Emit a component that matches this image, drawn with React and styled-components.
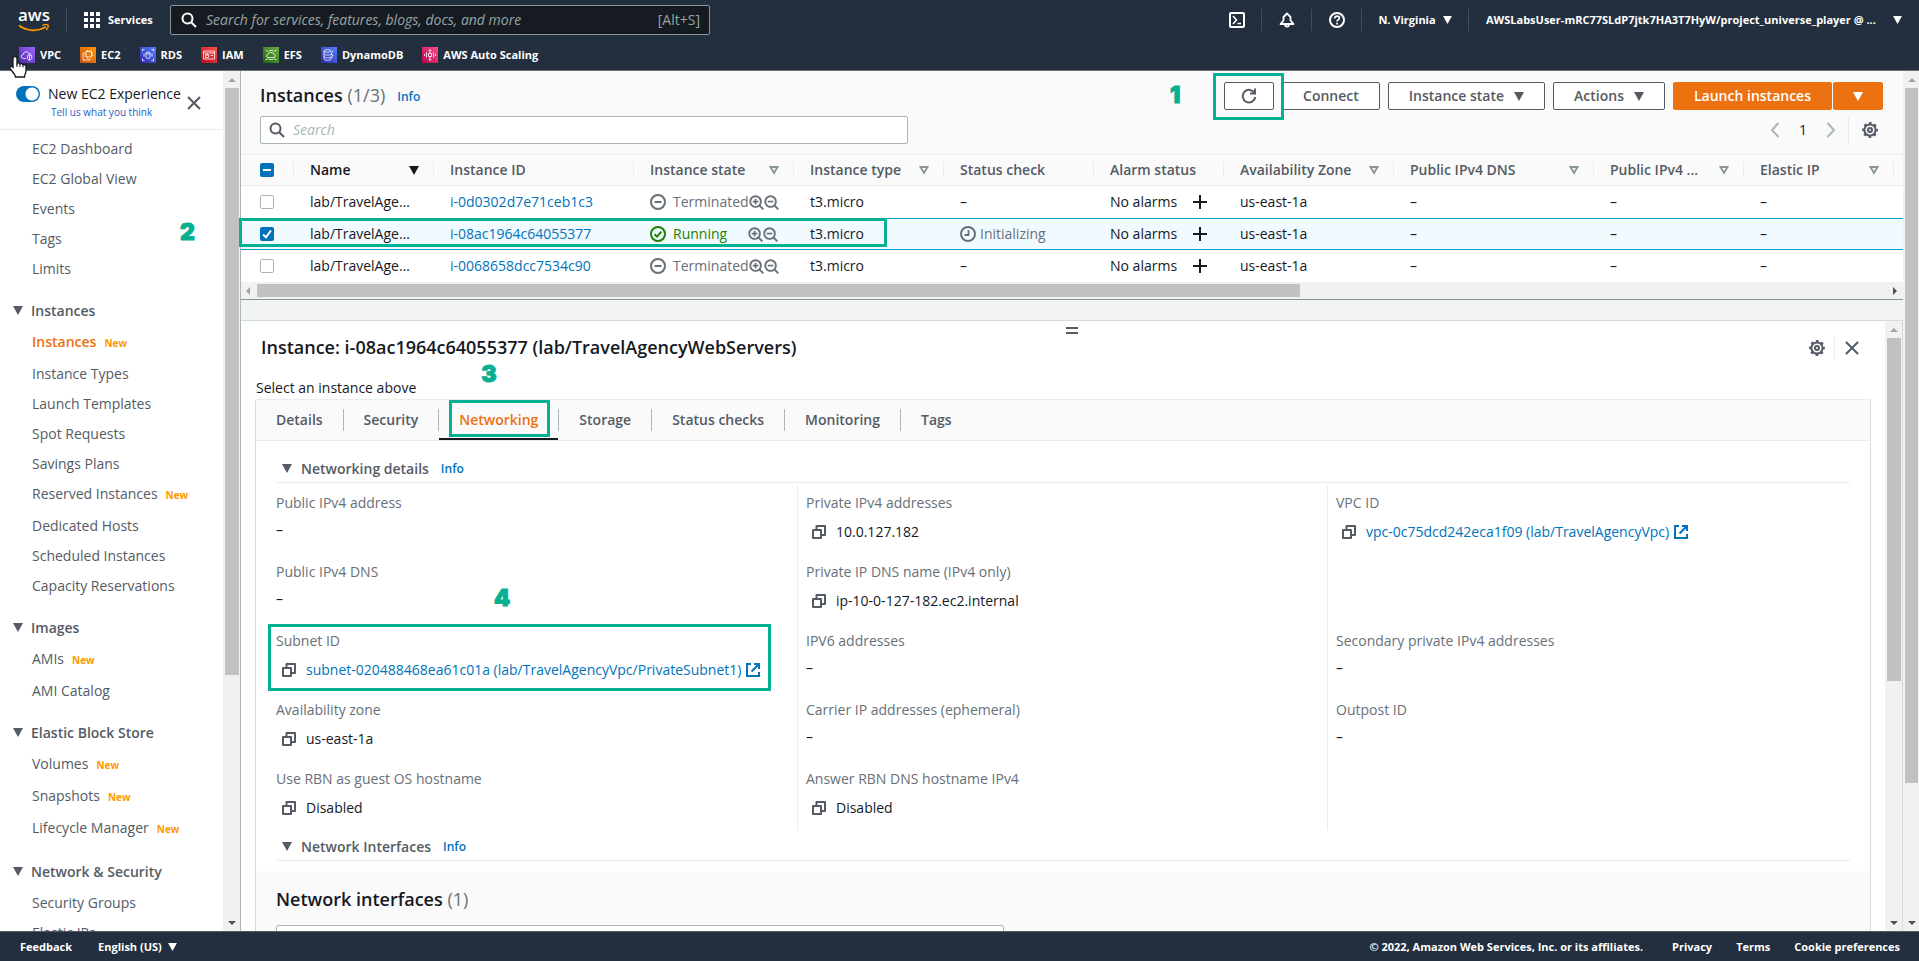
import React from 'react';
import styled, { createGlobalStyle, css } from 'styled-components';

const favorites = [
  { name: 'VPC', from: '#4d27a8', to: '#a166ff', art: 'vpc' },
  { name: 'EC2', from: '#c8511b', to: '#ff9900', art: 'ec2' },
  { name: 'RDS', from: '#2e27ad', to: '#527fff', art: 'rds' },
  { name: 'IAM', from: '#bd0816', to: '#ff5252', art: 'iam' },
  { name: 'EFS', from: '#1b660f', to: '#6cae3e', art: 'efs' },
  { name: 'DynamoDB', from: '#2e27ad', to: '#527fff', art: 'dynamo' },
  { name: 'AWS Auto Scaling', from: '#b0084d', to: '#ff4f8b', art: 'scaling' },
];

const navGroups = [
  {
    items: [
      { name: 'EC2 Dashboard' },
      { name: 'EC2 Global View' },
      { name: 'Events' },
      { name: 'Tags' },
      { name: 'Limits' },
    ],
  },
  {
    title: 'Instances',
    items: [
      { name: 'Instances', isNew: true, active: true },
      { name: 'Instance Types' },
      { name: 'Launch Templates' },
      { name: 'Spot Requests' },
      { name: 'Savings Plans' },
      { name: 'Reserved Instances', isNew: true },
      { name: 'Dedicated Hosts' },
      { name: 'Scheduled Instances' },
      { name: 'Capacity Reservations' },
    ],
  },
  {
    title: 'Images',
    items: [{ name: 'AMIs', isNew: true }, { name: 'AMI Catalog' }],
  },
  {
    title: 'Elastic Block Store',
    items: [
      { name: 'Volumes', isNew: true },
      { name: 'Snapshots', isNew: true },
      { name: 'Lifecycle Manager', isNew: true },
    ],
  },
  {
    title: 'Network & Security',
    items: [{ name: 'Security Groups' }, { name: 'Elastic IPs' }],
  },
];

const columns = [
  { name: 'Name', width: 140, sorted: true },
  { name: 'Instance ID', width: 200 },
  { name: 'Instance state', width: 160, filter: true },
  { name: 'Instance type', width: 150, filter: true },
  { name: 'Status check', width: 150 },
  { name: 'Alarm status', width: 130 },
  { name: 'Availability Zone', width: 170, filter: true },
  { name: 'Public IPv4 DNS', width: 200, filter: true },
  { name: 'Public IPv4 ...', width: 150, filter: true },
  { name: 'Elastic IP', width: 150, filter: true },
];

const instances = [
  { id: 'i-0d0302d7e71ceb1c3', state: 'Terminated' },
  { id: 'i-08ac1964c64055377', state: 'Running', check: 'Initializing', selected: true },
  { id: 'i-0068658dcc7534c90', state: 'Terminated' },
];

const tabs = ['Details', 'Security', 'Networking', 'Storage', 'Status checks', 'Monitoring', 'Tags'];

const detailColumns = [
  [
    { label: 'Public IPv4 address' },
    { label: 'Public IPv4 DNS' },
    {
      label: 'Subnet ID',
      value: 'subnet-020488468ea61c01a (lab/TravelAgencyVpc/PrivateSubnet1)',
      link: true,
      step: 4,
    },
    { label: 'Availability zone', value: 'us-east-1a' },
    { label: 'Use RBN as guest OS hostname', value: 'Disabled' },
  ],
  [
    { label: 'Private IPv4 addresses', value: '10.0.127.182' },
    { label: 'Private IP DNS name (IPv4 only)', value: 'ip-10-0-127-182.ec2.internal' },
    { label: 'IPV6 addresses' },
    { label: 'Carrier IP addresses (ephemeral)' },
    { label: 'Answer RBN DNS hostname IPv4', value: 'Disabled' },
  ],
  [
    { label: 'VPC ID', value: 'vpc-0c75dcd242eca1f09 (lab/TravelAgencyVpc)', link: true },
    null,
    { label: 'Secondary private IPv4 addresses' },
    { label: 'Outpost ID' },
  ],
];

const Icon = ({ size = 16, children, ...rest }) => (
  <svg width={size} height={size} viewBox="0 0 16 16" fill="none" stroke="currentColor" strokeWidth="2" aria-hidden="true" {...rest}>
    {children}
  </svg>
);

const Caret = ({ size = 10 }) => (
  <svg width={size} height={size - 1} viewBox="0 0 10 9" fill="currentColor" aria-hidden="true">
    <path d="M0 0h10L5 9z" />
  </svg>
);

const FilterCaret = () => (
  <svg width="10" height="9" viewBox="0 0 10 9" fill="none" stroke="#879596" strokeWidth="1.8" aria-hidden="true">
    <path d="M1.5 1h7L5 7z" />
  </svg>
);

const SearchIcon = () => (
  <Icon>
    <circle cx="6.5" cy="6.5" r="5" />
    <path d="M10.2 10.2 15 15" />
  </Icon>
);

const CloseIcon = () => (
  <Icon>
    <path d="M2 2l12 12M14 2 2 14" />
  </Icon>
);

const GearIcon = () => (
  <Icon>
    <circle cx="8" cy="8" r="5.6" strokeWidth="2" />
    <circle cx="8" cy="8" r="7" strokeWidth="1.8" strokeDasharray="2.75 2.75" strokeDashoffset="1.35" />
    <circle cx="8" cy="8" r="2" strokeWidth="2" />
  </Icon>
);

const CopyIcon = () => (
  <Icon strokeLinejoin="round">
    <path d="M2 6h8v8H2z" />
    <path d="M5.5 5.5V2H14v9h-3.5" />
  </Icon>
);

const ExternalIcon = () => (
  <Icon>
    <path d="M6 2H2v12h12v-4" />
    <path d="M9 2h5v5M14 2 6.5 9.5" />
  </Icon>
);

const ZoomIcon = ({ plus }) => (
  <Icon size={15}>
    <circle cx="7" cy="7" r="5.7" strokeWidth="2" />
    <path d="M11.2 11.2 15.3 15.3" />
    <path d={plus ? 'M4 7h6M7 4v6' : 'M4 7h6'} strokeWidth="1.8" />
  </Icon>
);

const StateIcon = ({ running }) => (
  <Icon>
    <circle cx="8" cy="8" r="7" />
    <path d={running ? 'M4.6 8.2 7 10.6l4.4-5' : 'M4.5 8h7'} />
  </Icon>
);

const PendingIcon = () => (
  <Icon>
    <circle cx="8" cy="8" r="7" />
    <path d="M8.5 4v5h-4" strokeWidth="1.8" />
  </Icon>
);

const serviceArt = {
  vpc: (
    <>
      <path d="M7 11.5H4.5a2 2 0 0 1-.3-4A3 3 0 0 1 9.8 6.3a2 2 0 0 1 2.2 1.2" />
      <path d="M8.5 8.5l2-.8 2.2.8V11c0 1.200-1 1.800-2.200 2.300-1.200-.5-2-1.100-2-2.300zM10.5 8v5" />
    </>
  ),
  ec2: (
    <>
      <path d="M6 4.500h5.500V10H6zM4.500 6H3v7h7v-1.500" />
      <path d="M7.500 3v1.500M10 3v1.500M13 6h-1.500M13 8.500h-1.500M4.500 7H6M4.500 9H6M7.500 10v1.500" />
    </>
  ),
  rds: (
    <>
      <path d="M6 6v4.500c0 1 4 1 4 0V6" />
      <ellipse cx="8" cy="6" rx="2" ry="1" />
      <path d="M2.500 4.500v-2h2M11.500 2.500h2v2M13.500 11.500v2h-2M4.500 13.500h-2v-2M4 6.500v3M12 6.500v3" />
    </>
  ),
  iam: (
    <>
      <path d="M2.500 4h11v8h-11zM2.500 6h11M9.500 8.500h2.500" />
      <path d="M4.500 8h3v2.500h-3zM5.200 8V7h1.600v1" />
    </>
  ),
  efs: (
    <>
      <path d="M5 10.500a1.500 1.500 0 0 1 0-3A3 3 0 0 1 10.500 7a1.700 1.700 0 0 1 0 3.500z" />
      <path d="M2.500 3l3 2M13.500 3l-3 2M2.500 13l3-1.500M13.500 13l-3-1.500M6 3.500h4M6 12.500h4" />
    </>
  ),
  dynamo: (
    <>
      <ellipse cx="6.500" cy="4" rx="3.500" ry="1.300" />
      <path d="M3 4v8c0 1.700 7 1.700 7 0V9.500M3 6.700c0 1.500 5 1.700 6 .8M3 9.500c0 1.500 5 1.700 6.500.8M12 3.500 9.700 8H12l-1.500 3" />
    </>
  ),
  scaling: (
    <>
      <path d="M6.500 6.500h3v3h-3zM8 2.500v4M8 9.500v4M6.800 4 8 2.700 9.200 4M6.800 12 8 13.300 9.200 12" />
      <path d="M4.500 5.500v5M11.500 5.500v5M2.500 7v2M13.500 7v2" />
    </>
  ),
};

const ServiceIcon = ({ from, to, art }) => (
  <svg width="16" height="16" viewBox="0 0 16 16" aria-hidden="true">
    <defs>
      <linearGradient id={`grad-${art}`} x1="0" y1="1" x2="1" y2="0">
        <stop offset="0" stopColor={from} />
        <stop offset="1" stopColor={to} />
      </linearGradient>
    </defs>
    <rect width="16" height="16" fill={`url(#grad-${art})`} />
    <g fill="none" stroke="#fff" strokeWidth=".8">
      {serviceArt[art]}
    </g>
  </svg>
);

const ScrollBar = ({ size, narrow }) => (
  <Track $narrow={narrow}>
    <TrackArrow $dim>
      <path d="M4 0l4 4H0z" />
    </TrackArrow>
    <ThumbArea>
      <Thumb $size={size} />
    </ThumbArea>
    <TrackArrow>
      <path d="M0 0h8L4 4z" />
    </TrackArrow>
  </Track>
);

const Field = ({ field }) => {
  if (!field) {
    return <FieldBox />;
  }
  return (
    <FieldBox>
      <dt>{field.label}</dt>
      {field.value ? (
        <FieldValue>
          <IconButton aria-label={`Copy ${field.label}`}>
            <CopyIcon />
          </IconButton>
          {field.link ? (
            <FieldLink href="#">
              {field.value}
              <ExternalIcon />
            </FieldLink>
          ) : (
            field.value
          )}
        </FieldValue>
      ) : (
        <EmptyValue>–</EmptyValue>
      )}
      {field.step && (
        <>
          <SubnetFrame />
          <SubnetStep>{field.step}</SubnetStep>
        </>
      )}
    </FieldBox>
  );
};

const App = () => {
  return (
    <Page>
      <GlobalStyle />
      <Header>
        <TopRow>
          <Logo href="#" aria-label="AWS home">
            aws
            <svg width="32" height="8" viewBox="0 0 32 8" fill="none" stroke="#ff9900" strokeWidth="2" aria-hidden="true">
              <path d="M1 1.500c8 5.500 18 6.500 27 1.500" />
              <path d="M24.500 1.200c2.500-.6 5-.6 5.500 0s-.3 3-1.800 4.800" strokeWidth="1.4" />
            </svg>
          </Logo>
          <Services>
            <svg width="16" height="16" viewBox="0 0 16 16" fill="currentColor" aria-hidden="true">
              <path d="M0 0h4v4H0zM6 0h4v4H6zM12 0h4v4h-4zM0 6h4v4H0zM6 6h4v4H6zM12 6h4v4h-4zM0 12h4v4H0zM6 12h4v4H6zM12 12h4v4h-4z" />
            </svg>
            Services
          </Services>
          <GlobalSearch>
            <SearchIcon />
            <input type="text" aria-label="Search AWS" placeholder="Search for services, features, blogs, docs, and more" />
            <span>[Alt+S]</span>
          </GlobalSearch>
          <Tools>
            <Tool aria-label="CloudShell">
              <Icon>
                <rect x="1" y="1" width="14" height="14" rx="1" />
                <path d="M4 4l3.500 4L4 12M8.500 11.500h3.500" strokeWidth="1.6" />
              </Icon>
            </Tool>
            <Tool aria-label="Notifications">
              <Icon>
                <path d="M8 1.500 4.500 5v3.500L1.500 12h13l-3-3.500V5zM6 12c0 3.500 4 3.500 4 0" strokeWidth="1.8" strokeLinejoin="round" />
              </Icon>
            </Tool>
            <Tool aria-label="Help">
              <Icon>
                <circle cx="8" cy="8" r="7" />
                <path d="M5.600 6.500c0-3.200 4.800-3.200 4.800-.4C10.400 7.800 8 7.600 8 9.500M8 10.800v1.800" strokeWidth="1.7" />
              </Icon>
            </Tool>
            <Region>
              N. Virginia
              <Caret size={9} />
            </Region>
            <Account>
              AWSLabsUser-mRC77SLdP7jtk7HA3T7HyW/project_universe_player @ ...
              <Caret size={9} />
            </Account>
          </Tools>
        </TopRow>
        <Favorites>
          {favorites.map((item) => (
            <Favorite key={item.name} href="#">
              <ServiceIcon {...item} />
              {item.name}
            </Favorite>
          ))}
        </Favorites>
        <Pointer width="22" height="24" viewBox="0 0 22 24" aria-hidden="true">
          <path
            d="M8 1.500c1.200 0 2 .8 2 2v5c.5-.9 2.800-.8 3 .6.800-.8 2.700-.5 3 .9.900-.6 2.600-.2 3 1.300V16c0 2-1.500 3.500-1.500 6h-9c0-2.500-3-5-5.500-8.500-.8-1.200.8-2.800 2.200-1.700L6 12.500v-9c0-1.200.8-2 2-2z"
            fill="#fff"
            stroke="#16191f"
            strokeWidth="1.3"
          />
          <path d="M10 8.500V12M13 9.200V12M16 10.200V12.500" stroke="#16191f" strokeWidth="1" />
        </Pointer>
      </Header>

      <Body>
        <Sidebar>
          <SidebarHeader>
            <Experience>
              <label>
                <Toggle type="checkbox" defaultChecked />
                New EC2 Experience
              </label>
              <a href="#">Tell us what you think</a>
            </Experience>
            <IconButton aria-label="Close navigation">
              <CloseIcon />
            </IconButton>
          </SidebarHeader>
          <Nav>
            {navGroups.map((group, i) => (
              <NavGroup key={i}>
                {group.title && (
                  <NavTitle>
                    <Caret />
                    {group.title}
                  </NavTitle>
                )}
                {group.items.map((item) => (
                  <NavItem key={item.name} href="#" $active={item.active} $tall={item.isNew}>
                    {item.name}
                    {item.isNew && <NewTag>New</NewTag>}
                  </NavItem>
                ))}
              </NavGroup>
            ))}
          </Nav>
          <NavStep>2</NavStep>
        </Sidebar>
        <ScrollBar size="71%" />

        <Main>
          <TableHeader>
            <TitleRow>
              <Title>
                Instances <em>(1/3)</em>
              </Title>
              <InfoLink href="#">Info</InfoLink>
              <Actions>
                <Highlighted>
                  <Button $icon aria-label="Refresh">
                    <Icon>
                      <path d="M13.500 5A6.300 6.300 0 1 0 14.300 9" />
                      <path d="M14 .5v5H9" />
                    </Icon>
                  </Button>
                  <RefreshFrame />
                  <RefreshStep>1</RefreshStep>
                </Highlighted>
                <Button>Connect</Button>
                <Button>
                  Instance state
                  <Caret />
                </Button>
                <Button>
                  Actions
                  <Caret />
                </Button>
                <SplitButton>
                  <Button $primary>Launch instances</Button>
                  <Button $primary $icon aria-label="More launch options">
                    <Caret />
                  </Button>
                </SplitButton>
              </Actions>
            </TitleRow>
            <FilterRow>
              <FilterBox>
                <SearchIcon />
                <input type="text" aria-label="Search instances" placeholder="Search" />
              </FilterBox>
              <Pagination>
                <PageArrow aria-label="Previous page">
                  <Icon>
                    <path d="M11.500 1 5 8l6.500 7" />
                  </Icon>
                </PageArrow>
                <span>1</span>
                <PageArrow aria-label="Next page">
                  <Icon>
                    <path d="M4.500 1 11 8l-6.500 7" />
                  </Icon>
                </PageArrow>
              </Pagination>
              <Preferences>
                <IconButton aria-label="Preferences">
                  <GearIcon />
                </IconButton>
              </Preferences>
            </FilterRow>
          </TableHeader>

          <TableArea>
            <TableViewport>
              <Table>
                <colgroup>
                  <col width="53" />
                  {columns.map((col) => (
                    <col key={col.name} width={col.width} />
                  ))}
                  <col />
                </colgroup>
                <thead>
                  <tr>
                    <CheckHead>
                      <CheckHeadContent>
                        <Checkbox type="checkbox" aria-label="Select all" $partial />
                      </CheckHeadContent>
                    </CheckHead>
                    {columns.map((col) => (
                      <Th key={col.name} $sorted={col.sorted}>
                        <ThContent>
                          {col.name}
                          {col.sorted && <Caret />}
                          {col.filter && <FilterCaret />}
                        </ThContent>
                      </Th>
                    ))}
                    <Th aria-hidden="true" />
                  </tr>
                </thead>
                <tbody>
                  {instances.map((row) => (
                    <Row key={row.id} $selected={row.selected}>
                      <CheckCell>
                        <Checkbox type="checkbox" aria-label={`Select ${row.id}`} defaultChecked={row.selected} />
                      </CheckCell>
                      <td>lab/TravelAge…</td>
                      <td>
                        <a href="#">{row.id}</a>
                      </td>
                      <td>
                        <State $running={row.state === 'Running'}>
                          <StateIcon running={row.state === 'Running'} />
                          <span>{row.state}</span>
                          <ZoomIcons>
                            <ZoomIcon plus />
                            <ZoomIcon />
                          </ZoomIcons>
                        </State>
                      </td>
                      <td>t3.micro</td>
                      <td>
                        {row.check ? (
                          <Check>
                            <PendingIcon />
                            {row.check}
                          </Check>
                        ) : (
                          '–'
                        )}
                      </td>
                      <td>
                        <Alarm>
                          No alarms
                          <IconButton $dark aria-label="Add alarm">
                            <Icon>
                              <path d="M8 1v14M1 8h14" />
                            </Icon>
                          </IconButton>
                        </Alarm>
                      </td>
                      <td>us-east-1a</td>
                      <td>–</td>
                      <td>–</td>
                      <td>–</td>
                      <Filler />
                    </Row>
                  ))}
                </tbody>
              </Table>
            </TableViewport>
            <HTrack>
              <svg width="4" height="8" viewBox="0 0 4 8" fill="#a3a3a3" aria-hidden="true">
                <path d="M4 0v8L0 4z" />
              </svg>
              <HThumbArea>
                <HThumb />
              </HThumbArea>
              <svg width="4" height="8" viewBox="0 0 4 8" fill="#505050" aria-hidden="true">
                <path d="M0 0v8l4-4z" />
              </svg>
            </HTrack>
            <RowFrame />
          </TableArea>

          <SplitPanel>
            <PanelContent>
              <PanelHeader>
                <Title>Instance: i-08ac1964c64055377 (lab/TravelAgencyWebServers)</Title>
                <PanelTools>
                  <IconButton aria-label="Panel preferences">
                    <GearIcon />
                  </IconButton>
                  <IconButton aria-label="Close panel">
                    <CloseIcon />
                  </IconButton>
                </PanelTools>
              </PanelHeader>
              <Hint>Select an instance above</Hint>
              <TabBox>
                <TabBar role="tablist">
                  {tabs.map((tab) => (
                    <TabSlot key={tab}>
                      <Tab role="tab" aria-selected={tab === 'Networking'} $active={tab === 'Networking'}>
                        {tab}
                      </Tab>
                      {tab === 'Networking' && (
                        <>
                          <TabFrame />
                          <TabStep>3</TabStep>
                        </>
                      )}
                    </TabSlot>
                  ))}
                </TabBar>
                <TabContent>
                  <SectionTitle $first>
                    <Caret />
                    <h3>Networking details</h3>
                    <InfoLink href="#">Info</InfoLink>
                  </SectionTitle>
                  <DetailGrid>
                    {detailColumns.map((fields, i) => (
                      <DetailColumn key={i}>
                        {fields.map((field, j) => (
                          <Field key={j} field={field} />
                        ))}
                      </DetailColumn>
                    ))}
                  </DetailGrid>
                  <SectionTitle>
                    <Caret />
                    <h3>Network Interfaces</h3>
                    <InfoLink href="#">Info</InfoLink>
                  </SectionTitle>
                  <InterfacePanel>
                    <Title>
                      Network interfaces <em>(1)</em>
                    </Title>
                    <InterfaceSearch type="text" aria-label="Filter network interfaces" />
                  </InterfacePanel>
                </TabContent>
              </TabBox>
            </PanelContent>
            <ScrollBar size="59.500%" />
            <Handle aria-label="Resize panel" />
          </SplitPanel>
        </Main>
        <ScrollBar size="84%" narrow />
      </Body>

      <Footer>
        <a href="#">Feedback</a>
        <Language>
          English (US)
          <Caret size={9} />
        </Language>
        <Legal>
          <span>© 2022, Amazon Web Services, Inc. or its affiliates.</span>
          <a href="#">Privacy</a>
          <a href="#">Terms</a>
          <a href="#">Cookie preferences</a>
        </Legal>
      </Footer>
    </Page>
  );
};

export default App;

const GlobalStyle = createGlobalStyle`
  * {
    box-sizing: border-box;
  }
  body {
    margin: 0;
    font-family: 'Open Sans', 'Noto Sans', sans-serif;
    font-size: 14px;
    line-height: 22px;
    color: #16191f;
    background: #fff;
  }
  button, input {
    font: inherit;
    color: inherit;
  }
  a {
    color: #0073bb;
    text-decoration: none;
  }
  h1, h3, dl, dd {
    margin: 0;
  }
  svg {
    flex: none;
    display: block;
  }
`;

const Page = styled.div`
  display: flex;
  flex-direction: column;
  height: 100vh;
`;

/* header */
const Header = styled.header`
  position: relative;
  z-index: 2;
  flex: none;
  background-color: #232f3e;
  border-bottom: 1px solid #687078;
  color: #fff;
  font-size: 11px;
  font-weight: 700;
`;
const TopRow = styled.div`
  display: flex;
  align-items: center;
  height: 40px;
`;
const Logo = styled.a`
  display: flex;
  flex-direction: column;
  width: 67px;
  padding-left: 18px;
  border-right: 1px solid #414d5c;
  color: #fff;
  font-size: 17px;
  font-weight: 600;
  line-height: 14px;
  svg {
    margin-top: 2px;
  }
`;
const Services = styled.button`
  display: flex;
  align-items: center;
  gap: 8px;
  width: 103px;
  padding: 0 0 0 17px;
  border: none;
  background: none;
`;
const GlobalSearch = styled.div`
  display: flex;
  align-items: center;
  gap: 7px;
  flex: 0 1 540px;
  height: 30px;
  padding: 0 9px 0 10px;
  border: 1px solid #879596;
  border-radius: 2px;
  background-color: #161b22;
  font-size: 14px;
  font-weight: 400;
  input {
    flex: 1;
    min-width: 0;
    border: none;
    background: none;
    outline: none;
    &::placeholder {
      color: #95a5a6;
      font-style: italic;
      opacity: 1;
    }
  }
  span {
    color: #95a5a6;
  }
`;
const Tools = styled.div`
  display: flex;
  align-items: center;
  margin-left: auto;
`;
const Tool = styled.button`
  display: flex;
  align-items: center;
  justify-content: center;
  width: 50px;
  height: 22px;
  padding: 0;
  border: none;
  border-right: 1px solid #414d5c;
  background: none;
`;
const Region = styled(Tool)`
  width: 107px;
  gap: 7px;
`;
const Account = styled(Tool)`
  width: 450px;
  padding: 0 17px;
  border: none;
  justify-content: space-between;
`;
const Favorites = styled.nav`
  display: flex;
  align-items: center;
  gap: 19px;
  height: 30px;
  padding-left: 19px;
`;
const Favorite = styled.a`
  display: flex;
  align-items: center;
  gap: 5px;
  color: #fff;
`;
const Pointer = styled.svg`
  position: absolute;
  left: 7px;
  top: 55px;
`;

/* shared parts */
const IconButton = styled.button`
  display: flex;
  padding: 0;
  border: none;
  background: none;
  color: ${({ $dark }) => ($dark ? '#16191f' : '#545b64')};
`;
const Title = styled.h1`
  padding-bottom: 2px;
  font-size: 18px;
  font-weight: 600;
  line-height: 24px;
  em {
    color: #687078;
    font-style: normal;
    font-weight: 400;
  }
`;
const InfoLink = styled.a`
  padding-top: 1px;
  font-size: 12px;
  font-weight: 600;
`;
const Track = styled.div`
  display: flex;
  flex-direction: column;
  align-items: center;
  flex: none;
  width: ${({ $narrow }) => ($narrow ? 16 : 17)}px;
  padding: 7px 1px 6px 2px;
  background-color: #f1f1f1;
`;
const TrackArrow = styled.svg.attrs({ width: 8, height: 4, viewBox: '0 0 8 4' })`
  fill: ${({ $dim }) => ($dim ? '#a3a3a3' : '#505050')};
`;
const ThumbArea = styled.div`
  flex: 1;
  width: 100%;
  margin: 6px 0;
`;
const Thumb = styled.div`
  height: ${({ $size }) => $size};
  background-color: #c1c1c1;
`;

/* numbered steps and frames laid over the console */
const Frame = styled.span`
  position: absolute;
  border: 3px solid #06b093;
  pointer-events: none;
`;
const Step = styled.span`
  position: absolute;
  color: #06b093;
  font-family: Inter, sans-serif;
  font-size: 23px;
  font-weight: 900;
  line-height: 24px;
  -webkit-text-stroke: 1px #06b093;
  text-shadow: 0 0 3px #fff;
`;
const RefreshFrame = styled(Frame)`
  inset: -9px -10px -10px -11px;
`;
const RefreshStep = styled(Step)`
  left: -54px;
  top: 1px;
`;
const NavStep = styled(Step)`
  left: 180px;
  top: 149px;
`;
const RowFrame = styled(Frame)`
  left: -2px;
  top: 64px;
  width: 648px;
  height: 29px;
`;
const TabFrame = styled(Frame)`
  inset: 0 8px 3px 11px;
`;
const TabStep = styled(Step)`
  left: 43px;
  top: -38px;
`;
const SubnetFrame = styled(Frame)`
  left: -8px;
  top: 1px;
  width: 503px;
  height: 67px;
`;
const SubnetStep = styled(Step)`
  left: 218px;
  top: -37px;
`;

/* sidebar */
const Body = styled.div`
  display: flex;
  flex: 1;
  min-height: 0;
`;
const Sidebar = styled.aside`
  position: relative;
  flex: none;
  width: 223px;
  overflow: hidden;
`;
const SidebarHeader = styled.div`
  display: flex;
  align-items: center;
  justify-content: space-between;
  height: 59px;
  padding: 6px 21px 0 16px;
  border-bottom: 1px solid #eaeded;
`;
const Experience = styled.div`
  display: flex;
  flex-direction: column;
  label {
    display: flex;
    align-items: center;
    gap: 8px;
    line-height: 18px;
    white-space: nowrap;
  }
  a {
    padding-left: 35px;
    font-size: 10px;
    line-height: 18px;
    color: #2262c4;
  }
`;
const Toggle = styled.input`
  appearance: none;
  flex: none;
  width: 24px;
  height: 16px;
  margin: 0;
  border-radius: 8px;
  background: radial-gradient(circle at 16px 8px, #fff 6px, #0073bb 7px);
`;
const Nav = styled.nav`
  padding-top: 4px;
`;
const NavGroup = styled.div`
  display: flex;
  flex-direction: column;
  margin-bottom: 12px;
`;
const NavTitle = styled.div`
  display: flex;
  align-items: center;
  gap: 8px;
  height: 31px;
  padding: 0 0 2px 13px;
  color: #545b64;
  font-weight: 600;
`;
const NavItem = styled.a`
  display: flex;
  align-items: baseline;
  gap: 8px;
  height: ${({ $tall }) => ($tall ? 32 : 30)}px;
  padding: 4px 0 0 32px;
  color: ${({ $active }) => ($active ? '#ec7211' : '#545b64')};
  font-weight: ${({ $active }) => ($active ? 600 : 400)};
  white-space: nowrap;
`;
const NewTag = styled.span`
  color: #ff9900;
  font-size: 10px;
  font-weight: 700;
`;

/* instances table */
const Main = styled.main`
  display: flex;
  flex-direction: column;
  flex: 1;
  min-width: 0;
  border-left: 1px solid #aab7b8;
  background-color: #f2f3f3;
`;
const TableHeader = styled.div`
  flex: none;
  padding: 11px 20px 10px 19px;
  background-color: #fafafa;
`;
const TitleRow = styled.div`
  display: flex;
  align-items: center;
  gap: 12px;
`;
const Actions = styled.div`
  display: flex;
  gap: 8px;
  margin-left: auto;
`;
const Highlighted = styled.div`
  position: relative;
`;
const Button = styled.button`
  display: flex;
  align-items: center;
  justify-content: center;
  gap: 10px;
  height: 28px;
  padding: 0 ${({ $icon }) => ($icon ? 16 : 20)}px;
  border: 1px solid #545b64;
  border-radius: 2px;
  background-color: #fff;
  color: #545b64;
  font-weight: 600;
  white-space: nowrap;
  ${({ $icon }) =>
    $icon &&
    css`
      width: 50px;
    `}
  ${({ $primary }) =>
    $primary &&
    css`
      border-color: #ec7211;
      background-color: #ec7211;
      color: #fff;
    `}
`;
const SplitButton = styled.div`
  display: flex;
  gap: 1px;
`;
const FilterRow = styled.div`
  display: flex;
  align-items: center;
  margin-top: 6px;
`;
const FilterBox = styled.div`
  display: flex;
  align-items: center;
  gap: 6px;
  flex: 0 1 648px;
  height: 28px;
  padding: 0 8px;
  border: 1px solid #aab7b8;
  border-radius: 2px;
  background-color: #fff;
  color: #545b64;
  input {
    flex: 1;
    border: none;
    outline: none;
    &::placeholder {
      color: #aab7b8;
      font-style: italic;
      opacity: 1;
    }
  }
`;
const Pagination = styled.div`
  display: flex;
  align-items: center;
  gap: 16px;
  margin-left: auto;
  padding-right: 9px;
`;
const PageArrow = styled.button`
  display: flex;
  padding: 0;
  border: none;
  background: none;
  color: #aab7b8;
`;
const Preferences = styled.div`
  display: flex;
  align-items: center;
  height: 28px;
  padding: 0 5px 0 13px;
  border-left: 1px solid #eaeded;
`;
const TableArea = styled.div`
  position: relative;
  flex: none;
  border-bottom: 1px solid #879596;
`;
const TableViewport = styled.div`
  overflow: hidden;
`;
const Table = styled.table`
  width: 100%;
  table-layout: fixed;
  border-spacing: 0;
  background-color: #fff;
`;
const Th = styled.th`
  height: 32px;
  padding: 0;
  border-top: 1px solid #eaeded;
  border-bottom: 1px solid #eaeded;
  background-color: #fafafa;
  color: ${({ $sorted }) => ($sorted ? '#16191f' : '#545b64')};
  font-weight: 600;
  text-align: left;
`;
const ThContent = styled.div`
  display: flex;
  align-items: center;
  justify-content: space-between;
  height: 16px;
  padding: 0 14px 0 16px;
  border-right: 1px solid #eaeded;
  white-space: nowrap;
`;
const CheckHead = styled(Th)``;
const CheckHeadContent = styled(ThContent)`
  padding-left: 19px;
`;
const Row = styled.tr`
  td {
    height: 32px;
    padding: 0 0 0 16px;
    white-space: nowrap;
    ${({ $selected }) =>
      $selected &&
      css`
        border-top: 1px solid #00a1c9;
        border-bottom: 1px solid #00a1c9;
        background-color: #f1faff;
      `}
  }
`;
const CheckCell = styled.td`
  && {
    padding-left: 19px;
  }
`;
const Filler = styled.td`
  && {
    padding: 0;
  }
`;
const tick = `url("data:image/svg+xml,%3Csvg xmlns='http://www.w3.org/2000/svg' viewBox='0 0 14 14'%3E%3Cpath d='M3 7.500l3 2.700L11 3.500' fill='none' stroke='white' stroke-width='2'/%3E%3C/svg%3E")`;
const dash = `url("data:image/svg+xml,%3Csvg xmlns='http://www.w3.org/2000/svg' viewBox='0 0 14 14'%3E%3Cpath d='M3 7h8' stroke='white' stroke-width='2'/%3E%3C/svg%3E")`;
const Checkbox = styled.input`
  appearance: none;
  display: block;
  width: 14px;
  height: 14px;
  margin: 0;
  border: 1px solid #aab7b8;
  border-radius: 2px;
  background-color: #fff;
  &:checked {
    border: none;
    background: #0073bb ${tick};
  }
  ${({ $partial }) =>
    $partial &&
    css`
      border: none;
      background: #0073bb ${dash};
    `}
`;
const State = styled.div`
  display: flex;
  align-items: center;
  color: ${({ $running }) => ($running ? '#1d8102' : '#687078')};
  span {
    min-width: 82px;
    padding-left: 7px;
  }
`;
const ZoomIcons = styled.div`
  display: flex;
  color: #687078;
`;
const Check = styled.div`
  display: flex;
  align-items: center;
  gap: 4px;
  color: #687078;
`;
const Alarm = styled.div`
  display: flex;
  align-items: center;
  gap: 15px;
`;
const HTrack = styled.div`
  display: flex;
  align-items: center;
  justify-content: space-between;
  height: 17px;
  padding: 0 6px 0 5px;
  background-color: #f1f1f1;
`;
const HThumbArea = styled.div`
  flex: 1;
  margin: 0 7px;
`;
const HThumb = styled.div`
  width: 64%;
  height: 13px;
  background-color: #c1c1c1;
`;

/* split panel */
const SplitPanel = styled.section`
  position: relative;
  display: flex;
  flex: 1;
  min-height: 0;
  margin-top: 20px;
  border-top: 1px solid #d5dbdb;
  border-right: 1px solid #d5dbdb;
  background-color: #fff;
`;
const Handle = styled.button`
  position: absolute;
  top: 6px;
  left: 50%;
  width: 12px;
  height: 7px;
  margin-left: -6px;
  padding: 0;
  border: solid #545b64;
  border-width: 2px 0;
  background: none;
`;
const PanelContent = styled.div`
  flex: 1;
  min-width: 0;
  padding: 0 14px;
  overflow: hidden;
`;
const PanelHeader = styled.div`
  display: flex;
  align-items: center;
  justify-content: space-between;
  padding: 14px 11px 16px 6px;
`;
const PanelTools = styled.div`
  display: flex;
  align-items: center;
  gap: 19px;
  button + button {
    position: relative;
    &::before {
      content: '';
      position: absolute;
      left: -10px;
      top: -4px;
      height: 24px;
      border-left: 1px solid #eaeded;
    }
  }
`;
const Hint = styled.div`
  padding-left: 1px;
`;
const TabBox = styled.div`
  border: 1px solid #d5dbdb;
  border-top-color: #eaeded;
  border-radius: 2px;
`;
const TabBar = styled.div`
  display: flex;
  border-bottom: 1px solid #eaeded;
  background-color: #fafafa;
`;
const TabSlot = styled.div`
  position: relative;
  display: flex;
  align-items: center;
  & + &::before {
    content: '';
    height: 22px;
    border-left: 1px solid #aab7b8;
  }
`;
const Tab = styled.button`
  height: 40px;
  padding: 0 20px;
  border: none;
  background: none;
  color: ${({ $active }) => ($active ? '#ec7211' : '#545b64')};
  font-weight: 600;
  ${({ $active }) =>
    $active &&
    css`
      box-shadow: inset 0 -2px #16191f;
    `}
`;
const TabContent = styled.div`
  padding: 0 20px;
`;
const SectionTitle = styled.div`
  display: flex;
  align-items: center;
  height: 29px;
  margin-top: ${({ $first }) => ($first ? 13 : 2)}px;
  padding: 1px 0 0 6px;
  border-bottom: 1px solid #eaeded;
  color: #545b64;
  h3 {
    margin: 0 12px 0 9px;
    font-size: 14px;
    font-weight: 600;
  }
`;
const DetailGrid = styled.div`
  display: grid;
  grid-template-columns: repeat(3, minmax(0, 1fr));
  gap: 8px;
  margin: 2px -8px 0 0;
`;
const DetailColumn = styled.dl`
  border-right: 1px solid #eaeded;
  &:last-child {
    border-right: none;
  }
`;
const FieldBox = styled.div`
  position: relative;
  height: 69px;
  padding-top: 7px;
  dt {
    color: #687078;
  }
`;
const FieldValue = styled.dd`
  display: flex;
  align-items: center;
  gap: 9px;
  margin-top: 7px;
  padding-left: 5px;
  white-space: nowrap;
`;
const FieldLink = styled.a`
  display: flex;
  align-items: center;
  gap: 4px;
`;
const EmptyValue = styled.dd`
  margin-top: 5px;
`;
const InterfacePanel = styled.div`
  display: flex;
  flex-direction: column;
  gap: 12px;
  margin: 10px -20px 0;
  padding: 16px 20px 20px;
  background-color: #fafafa;
`;
const InterfaceSearch = styled.input`
  width: 100%;
  max-width: 728px;
  height: 28px;
  border: 1px solid #aab7b8;
  border-radius: 2px;
  background-color: #fff;
`;

/* footer */
const Footer = styled.footer`
  display: flex;
  align-items: center;
  flex: none;
  gap: 26px;
  height: 30px;
  padding: 0 19px 0 20px;
  border-top: 1px solid #545b64;
  background-color: #232f3e;
  color: #fff;
  font-size: 11px;
  font-weight: 700;
  position: relative;
  a {
    color: #fff;
  }
`;
const Language = styled.button`
  display: flex;
  align-items: center;
  gap: 6px;
  padding: 0;
  border: none;
  background: none;
`;
const Legal = styled.div`
  display: flex;
  gap: 24px;
  margin-left: auto;
  span {
    margin-right: 5px;
  }
`;
